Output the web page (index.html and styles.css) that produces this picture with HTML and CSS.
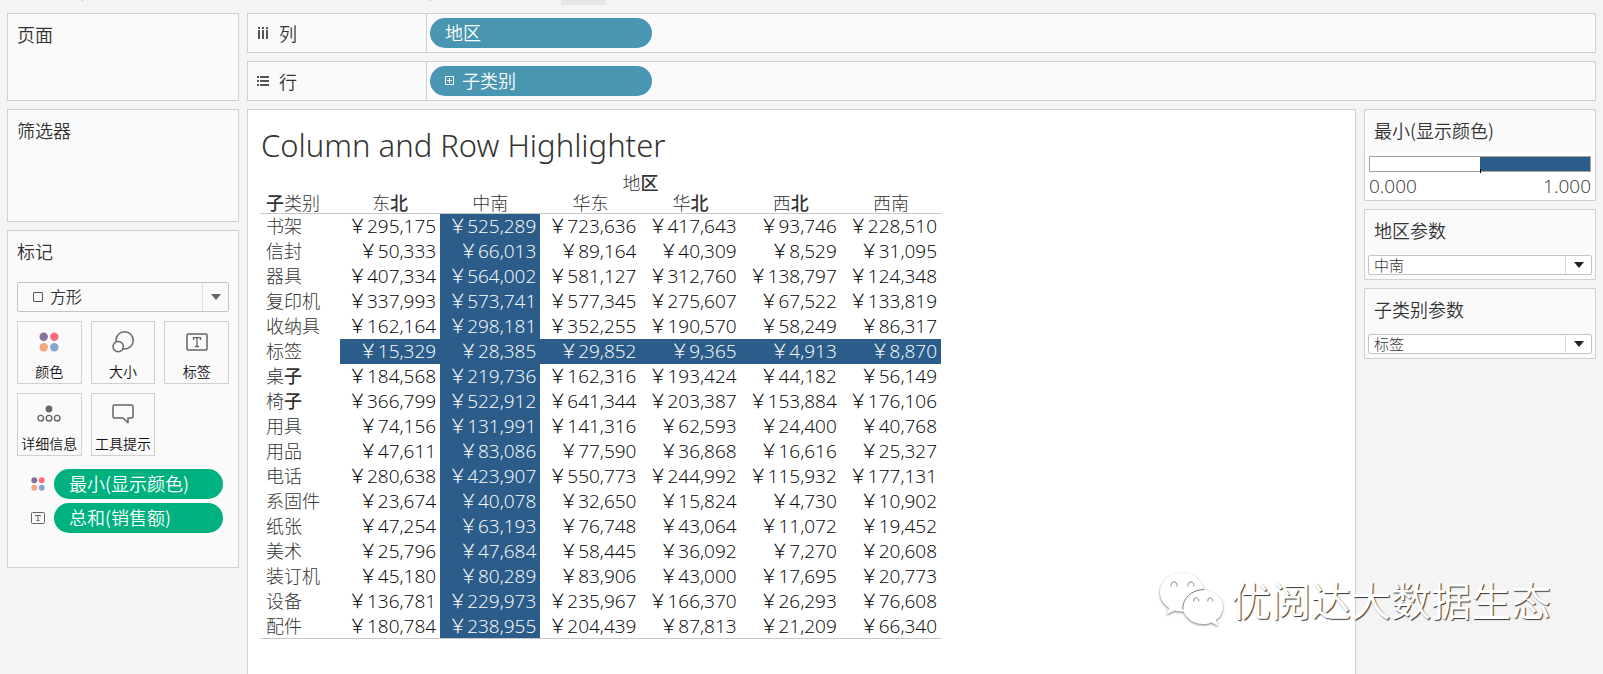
FILE: index.html
```html
<!DOCTYPE html>
<html lang="zh-CN">
<head>
<meta charset="utf-8">
<title>Column and Row Highlighter</title>
<link rel="stylesheet" href="styles.css">
</head>
<body>
<svg class="defs" aria-hidden="true">
  <symbol id="dots" viewBox="0 0 20 20">
    <circle cx="4.7" cy="4.7" r="4.2" fill="#87709c"/><circle cx="15.3" cy="4.7" r="4.2" fill="#fb6e7e"/>
    <circle cx="4.7" cy="15.3" r="4.2" fill="#f4a77c"/><circle cx="15.3" cy="15.3" r="4.2" fill="#83a5cd"/>
  </symbol>
  <symbol id="label" viewBox="0 0 22 18">
    <rect x="1" y="1" width="20" height="16" rx="1" fill="none" stroke="#666" stroke-width="1.5"/>
    <path d="M7.500 7V4.700h7V7M11 4.700v8.800M9 13.500h4" fill="none" stroke="#666" stroke-width="1.300"/>
  </symbol>
</svg>

<div class="toolbar"><span class="tick"></span><span class="tick"></span><span class="active-tool"></span></div>

<div class="workspace">
  <aside class="side">
    <section class="card pages"><h2>页面</h2></section>
    <section class="card filters"><h2>筛选器</h2></section>
    <section class="card marks">
      <h2>标记</h2>
      <div class="combo mark-type">
        <span class="square"></span>
        <select aria-label="标记"><option>方形</option></select>
        <span class="arrow"></span>
      </div>
      <div class="mark-grid">
        <button><svg width="20" height="20"><use href="#dots"/></svg>颜色</button>
        <button><svg width="22" height="22" viewBox="0 0 22 22" fill="#fafafa" stroke="#666" stroke-width="1.5"><circle cx="12.6" cy="9.4" r="8.6"/><circle cx="6.2" cy="15.6" r="5.2"/></svg>大小</button>
        <button><svg width="22" height="18"><use href="#label"/></svg>标签</button>
        <button><svg width="24" height="18" viewBox="0 0 24 18" fill="none" stroke="#666" stroke-width="1.4"><circle cx="12" cy="4" r="3.4" fill="#666" stroke="none"/><circle cx="3.8" cy="13.2" r="2.8"/><circle cx="12" cy="13.2" r="2.8"/><circle cx="20.2" cy="13.2" r="2.8"/></svg>详细信息</button>
        <button><svg width="22" height="20" viewBox="0 0 22 20" fill="none" stroke="#666" stroke-width="1.5" stroke-linejoin="round"><path d="M2.500 1h17q1.500 0 1.500 1.500v10q0 1.500-1.500 1.500H16v4.800L11 14H2.500Q1 14 1 12.500v-10Q1 1 2.500 1Z"/></svg>工具提示</button>
      </div>
      <ul class="encodings">
        <li><svg width="14" height="14"><use href="#dots"/></svg><button class="pill measure">最小(显示颜色)</button></li>
        <li><svg width="14" height="12" viewBox="0 0 14 12" fill="none" stroke="#666"><rect x=".5" y=".5" width="13" height="11" rx="1"/><path d="M4.500 4.500v-1h5v1M7 3.500v5M5.500 8.500h3"/></svg><button class="pill measure">总和(销售额)</button></li>
      </ul>
    </section>
  </aside>

  <main class="main">
    <div class="shelf">
      <div class="shelf-name"><svg width="12" height="13" viewBox="0 0 12 13" fill="#555"><path d="M1 0h2v2H1zM5 0h2v2H5zM9 0h2v2H9zM1 3h2v9H1zM5 3h2v9H5zM9 3h2v9H9z"/></svg>列</div>
      <button class="pill dimension">地区</button>
    </div>
    <div class="shelf">
      <div class="shelf-name"><svg width="12" height="12" viewBox="0 0 12 12" fill="#555"><path d="M0 1h2v2H0zM0 5h2v2H0zM0 9h2v2H0zM3 1h9v2H3zM3 5h9v2H3zM3 9h9v2H3z"/></svg>行</div>
      <button class="pill dimension"><svg width="9" height="9" viewBox="0 0 9 9" fill="none" stroke="#fff"><path d="M.5.5h8v8h-8zM2 4.500h5M4.500 2v5"/></svg>子类别</button>
    </div>
    <div class="view">
      <section class="sheet">
        <h1>Column and Row Highlighter</h1>
        <table>
          <thead>
            <tr class="field"><td></td><th colspan="6">地<b>区</b></th></tr>
            <tr><th><b>子</b>类别</th><th>东<b>北</b></th><th>中南</th><th>华东</th><th>华<b>北</b></th><th>西<b>北</b></th><th>西南</th></tr>
          </thead>
          <tbody>
            <tr><th>书架</th><td>￥295,175</td><td class="on">￥525,289</td><td>￥723,636</td><td>￥417,643</td><td>￥93,746</td><td>￥228,510</td></tr>
            <tr><th>信封</th><td>￥50,333</td><td class="on">￥66,013</td><td>￥89,164</td><td>￥40,309</td><td>￥8,529</td><td>￥31,095</td></tr>
            <tr><th>器具</th><td>￥407,334</td><td class="on">￥564,002</td><td>￥581,127</td><td>￥312,760</td><td>￥138,797</td><td>￥124,348</td></tr>
            <tr><th>复印机</th><td>￥337,993</td><td class="on">￥573,741</td><td>￥577,345</td><td>￥275,607</td><td>￥67,522</td><td>￥133,819</td></tr>
            <tr><th>收纳具</th><td>￥162,164</td><td class="on">￥298,181</td><td>￥352,255</td><td>￥190,570</td><td>￥58,249</td><td>￥86,317</td></tr>
            <tr class="on-row"><th>标签</th><td>￥15,329</td><td>￥28,385</td><td>￥29,852</td><td>￥9,365</td><td>￥4,913</td><td>￥8,870</td></tr>
            <tr><th>桌<b>子</b></th><td>￥184,568</td><td class="on">￥219,736</td><td>￥162,316</td><td>￥193,424</td><td>￥44,182</td><td>￥56,149</td></tr>
            <tr><th>椅<b>子</b></th><td>￥366,799</td><td class="on">￥522,912</td><td>￥641,344</td><td>￥203,387</td><td>￥153,884</td><td>￥176,106</td></tr>
            <tr><th>用具</th><td>￥74,156</td><td class="on">￥131,991</td><td>￥141,316</td><td>￥62,593</td><td>￥24,400</td><td>￥40,768</td></tr>
            <tr><th>用品</th><td>￥47,611</td><td class="on">￥83,086</td><td>￥77,590</td><td>￥36,868</td><td>￥16,616</td><td>￥25,327</td></tr>
            <tr><th>电话</th><td>￥280,638</td><td class="on">￥423,907</td><td>￥550,773</td><td>￥244,992</td><td>￥115,932</td><td>￥177,131</td></tr>
            <tr><th>系固件</th><td>￥23,674</td><td class="on">￥40,078</td><td>￥32,650</td><td>￥15,824</td><td>￥4,730</td><td>￥10,902</td></tr>
            <tr><th>纸张</th><td>￥47,254</td><td class="on">￥63,193</td><td>￥76,748</td><td>￥43,064</td><td>￥11,072</td><td>￥19,452</td></tr>
            <tr><th>美术</th><td>￥25,796</td><td class="on">￥47,684</td><td>￥58,445</td><td>￥36,092</td><td>￥7,270</td><td>￥20,608</td></tr>
            <tr><th>装订机</th><td>￥45,180</td><td class="on">￥80,289</td><td>￥83,906</td><td>￥43,000</td><td>￥17,695</td><td>￥20,773</td></tr>
            <tr><th>设备</th><td>￥136,781</td><td class="on">￥229,973</td><td>￥235,967</td><td>￥166,370</td><td>￥26,293</td><td>￥76,608</td></tr>
            <tr><th>配件</th><td>￥180,784</td><td class="on">￥238,955</td><td>￥204,439</td><td>￥87,813</td><td>￥21,209</td><td>￥66,340</td></tr>
          </tbody>
        </table>
      </section>
      <aside class="side">
        <section class="card legend">
          <h2>最小(显示颜色)</h2>
          <div class="legend-body">
            <div class="ramp"></div>
            <div class="range"><span>0.000</span><span>1.000</span></div>
          </div>
        </section>
        <section class="card param">
          <h2><label for="region">地区参数</label></h2>
          <div class="combo"><select id="region"><option>中南</option></select><span class="arrow"></span></div>
        </section>
        <section class="card param">
          <h2><label for="category">子类别参数</label></h2>
          <div class="combo"><select id="category"><option>标签</option></select><span class="arrow"></span></div>
        </section>
      </aside>
    </div>
  </main>
</div>

<div class="watermark">
  <svg width="66" height="58" viewBox="0 0 66 58" fill="#fff">
    <path d="M23 1C10 1 1 10 1 20.500c0 7 3.500 12 9 15.500L7.500 42.500l8-4c3 1 7 1.300 11 1C29 24 38 18 45 17.500 42 7 34 1 23 1Z"/>
    <path d="M44 18c-11 0-20 7.500-20 17s9 17 20 17c3.500 0 6-.5 8.500-1.500L59 54l-2-6c4.500-3 7-8 7-13 0-9.500-9-17-20-17Z"/>
    <path d="M24 37.500C23 27 32 18 45 17.500" fill="none" stroke="#777"/>
    <g fill="none" stroke="#8a8a8a"><path d="M12.500 14.500a3 3 0 1 1 5 0M29.500 14.500a3 3 0 1 1 5 0M35 29.500a2.500 2.500 0 1 1 4.500 0M49 29.500a2.500 2.500 0 1 1 4.500 0"/></g>
  </svg>
  <span>优阅达大数据生态</span>
</div>
</body>
</html>
```
FILE: styles.css
```css
* { box-sizing: border-box; }

body {
  margin: 0;
  min-height: 100vh;
  display: flex;
  flex-direction: column;
  background: #f4f4f4;
  color: #333;
  font-family: "Open Sans", "Noto Sans CJK SC", sans-serif;
  font-size: 18px;
  line-height: 24px;
}

h1, h2, ul { margin: 0; padding: 0; font-weight: 400; }
button, select { font: inherit; color: inherit; }
.defs { position: absolute; width: 0; height: 0; }

.toolbar { display: flex; height: 13px; padding-left: 82px; }
.tick { width: 1px; height: 1px; background: #bbb; margin-right: 347px; }
.tick + .tick { margin-right: 130px; }
.active-tool { width: 45px; height: 5px; background: #e6e6e6; }

.workspace { flex: 1; display: flex; gap: 8px; padding: 0 7px; }
.side { flex: none; width: 232px; display: flex; flex-direction: column; gap: 8px; }
.main { flex: 1; min-width: 0; display: flex; flex-direction: column; gap: 8px; }

.card { background: #fafafa; border: 1px solid #d0d0d0; }
.card h2 { padding: 8px 9px; font-size: 18px; line-height: 24px; font-family: "Noto Sans CJK SC", sans-serif; font-weight: 350; }
.pages { height: 88px; }
.filters { height: 113px; }
.marks { padding: 0 9px 34px; }
.marks h2 { padding: 8px 0 19px; }

.combo {
  display: flex;
  align-items: stretch;
  height: 20px;
  border: 1px solid #c4c4c4;
  border-radius: 2px;
  background: #fff;
  overflow: hidden;
}
.combo select {
  appearance: none;
  flex: 1;
  min-width: 0;
  border: 0;
  padding: 0 5px;
  background: transparent;
  font-size: 15px;
  line-height: 18px;
  font-weight: 300;
}
.arrow {
  width: 26px;
  border-left: 1px solid #ddd;
  display: flex;
  align-items: center;
  justify-content: center;
}
.arrow::before {
  content: "";
  border: 5px solid transparent;
  border-top: 6px solid #222;
  border-bottom: 0;
}
.mark-type { height: 30px; background: #fafafa; }
.mark-type select { font-size: 16px; padding: 0 7px; font-weight: 350; }
.mark-type .arrow::before { border-top-color: #666; }
.square { width: 10px; height: 10px; margin-left: 15px; border: 1px solid #555; border-radius: 1px; align-self: center; }

.mark-grid { display: grid; grid-template-columns: repeat(3, 1fr); gap: 9px; margin-top: 9px; }
.mark-grid button {
  height: 63px;
  padding: 9px 0 0;
  display: grid;
  grid-template-rows: 22px 1fr;
  align-items: center;
  justify-items: center;
  row-gap: 6px;
  border: 1px solid #d0d0d0;
  background: #fafafa;
  color: #111;
  font-size: 14px;
  line-height: 18px;
  font-weight: 350;
  font-family: "Noto Sans CJK SC", sans-serif;
  white-space: nowrap;
}

.encodings { list-style: none; display: grid; gap: 4px; margin-top: 13px; padding: 0 6px 0 14px; }
.encodings li { display: flex; align-items: center; gap: 9px; }
.pill {
  height: 30px;
  border: 0;
  border-radius: 15px;
  padding: 0 15px 2px;
  display: flex;
  align-items: center;
  gap: 8px;
  color: #fff;
  text-align: left;
  font-family: "Noto Sans CJK SC", sans-serif;
  font-weight: 350;
}
.measure { flex: 1; background: #00b180; }
.dimension { width: 222px; margin-left: 3px; background: #4996b2; }

.shelf { display: flex; align-items: center; height: 40px; border: 1px solid #d0d0d0; background: #fafafa; }
.shelf-name {
  width: 179px;
  height: 100%;
  padding-left: 9px;
  display: flex;
  align-items: center;
  gap: 10px;
  border-right: 1px solid #d0d0d0;
  font-weight: 350;
  font-family: "Noto Sans CJK SC", sans-serif;
}

.view { flex: 1; display: flex; gap: 8px; }
.sheet { flex: 1; min-width: 0; background: #fff; border: 1px solid #d0d0d0; border-bottom: 0; padding: 13px 12px 0; }
h1 { padding: 0 1px; font-family: "Noto Sans", "Open Sans", sans-serif; font-size: 31px; line-height: 44px; font-weight: 300; }

table { width: 681px; table-layout: fixed; border-collapse: collapse; margin-top: 6px; border-bottom: 1px solid #c8c8c8; }
th, td { padding: 0; height: 25px; font-weight: 300; line-height: 24px; }
b { font-weight: 500; }
th:first-child { width: 80px; padding-left: 6px; text-align: left; }
thead th, thead td { height: 20px; line-height: 20px; }
thead tr:last-child { border-bottom: 1px solid #c8c8c8; }
thead .field td { width: 80px; }
tbody td { padding-right: 4px; text-align: right; font-size: 19px; color: #000; }
.on, .on-row td { background: #2c5d8a; color: #fff; }

.legend h2 { padding-bottom: 10px; }
.legend-body { background: #fff; padding: 4px 4px 2px; }
.ramp { height: 16px; border: 1px solid #a5a594; background: linear-gradient(90deg, #fff 50%, #2c5d8a 50%); }
.ramp::after { content: ""; display: block; width: 1px; height: 4px; margin: 12px auto 0; background: #000; }
.range { display: flex; justify-content: space-between; padding-top: 2px; font-size: 19px; font-weight: 300; }
.param { padding: 0 3px 4px; }
.param h2 { padding: 8px 6px 13px; }

.watermark {
  position: absolute;
  right: 52px;
  bottom: 41px;
  display: flex;
  align-items: center;
  gap: 6px;
  color: #fff;
  font-size: 40px;
  line-height: 64px;
  text-shadow: 1px 1px 1px #333;
}
.watermark svg { filter: drop-shadow(0 1px 1px #777); }
```
